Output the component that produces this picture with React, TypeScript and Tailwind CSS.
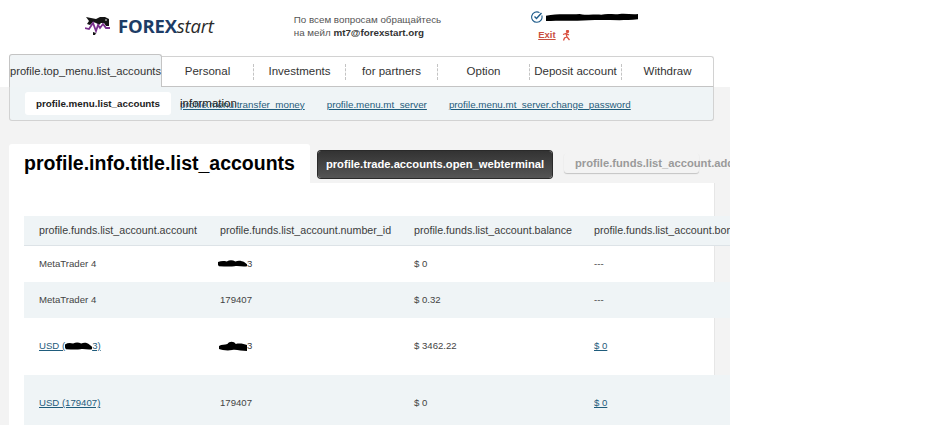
const Blob = ({ className, d }: { className: string; d: string }) => (
  <svg className={className} viewBox="0 0 30 10" preserveAspectRatio="none">
    <path d={d} fill="#000" />
  </svg>
);

const blobA = 'M0 3 C3 1 6 1 9 2 C12 0 15 0 18 2 C21 0 25 1 27 3 L30 6 L30 9 C25 10 21 8 17 9 C12 10 6 9 1 9 L0 7 Z';
const blobB = 'M0 5 C3 3 6 4 9 3 C11 0 16 0 18 3 C22 2 27 3 30 4 L30 10 C24 10 18 8 14 9 C9 10 3 9 0 8 Z';
const blobC = 'M0 3 C4 0 8 2 11 1 C14 3 16 1 18 2 C20 0 22 2 24 1 C26 0 28 2 30 1 L30 7 C24 9 20 7 14 8 C9 9 4 8 0 9 Z';

const tabs = ['Personal', 'Investments', 'for partners', 'Option', 'Deposit account', 'Withdraw'];

const Logo = () => (
  <svg width="25" height="21" viewBox="0 0 25 21" className="shrink-0">
    <path d="M1 1 L6 2 L11 3 L15 1 L20 1 L24 3 L24 10 L21 10 L19 7 L16 7 L14 9 L11 7 L8 6 L5 9 L2 8 L4 5 Z" fill="#141414" />
    <circle cx="21" cy="4" r="0.8" fill="#fff" />
    <path d="M0 12 L4 13 L8 7 L11 15 L13 9 L15 12 L18 8 L21 12 L25 12" fill="none" stroke="#7a2f8e" strokeWidth="1.8" />
    <path d="M8 16 L11 17 L10 19 L8 19 Z" fill="#141414" />
  </svg>
);

const Th = ({ children, className }: { children: string; className: string }) => (
  <div className={`shrink-0 whitespace-nowrap ${className}`}>{children}</div>
);

export default function App() {
  return (
    <div className="w-[935px] h-[425px] overflow-hidden bg-white text-[#333] font-['Liberation_Sans',Arial,sans-serif]">
      {/* Top header */}
      <header className="flex h-[56px]">
        <div className="ml-[85px] mt-[14px] flex h-[24px] items-center gap-[8px]">
          <Logo />
          <span className="text-[18.5px] leading-none tracking-[-0.2px] text-[#1d3c66] font-['Open_Sans',sans-serif]">
            <b>FOREX</b><i className="text-[#2a2a2a]">start</i>
          </span>
        </div>
        <div className="ml-[80px] mt-[13px] text-[9.8px] leading-[13px] text-[#555]">
          <div>По всем вопросам обращайтесь</div>
          <div>на мейл <span className="text-[#333] font-bold">mt7@forexstart.org</span></div>
        </div>
        <div className="ml-[90px] mt-[11px]">
          <div className="flex items-center gap-[3px]">
            <svg width="12" height="12" viewBox="0 0 12 12" fill="none" stroke="#1f5c8b" strokeWidth="1.1">
              <path d="M10.8 4.5 A5.2 5.2 0 1 1 8.5 1.6" />
              <path d="M3.5 5.5 L5.5 7.5 L10.5 2" strokeWidth="1.4" />
            </svg>
            <Blob className="w-[92px] h-[9px]" d={blobC} />
          </div>
          <div className="ml-[7px] mt-[5px] flex items-center gap-[6px]">
            <span className="text-[9.5px] font-bold text-[#c9503f] underline">Exit</span>
            <svg width="9" height="11" viewBox="0 0 9 11" fill="none" stroke="#d9503f" strokeWidth="1.3">
              <circle cx="5.5" cy="1.5" r="1" fill="#d9503f" />
              <path d="M1 4.5 L4 3.5 L7 5 M4 3.5 L5 7 L7.5 10 M5 7 L2.5 8 L1.5 10.5" />
            </svg>
          </div>
        </div>
      </header>

      {/* Main menu */}
      <nav className="relative ml-[9px] flex h-[31px] w-[705px] rounded-t-[3px] border border-[#d2d2d2] border-b-[#c4c4c4] bg-white text-[11.5px] text-[#333]">
        <div className="absolute left-[-1px] top-[-3px] flex h-[33px] w-[153px] items-center justify-center rounded-t-[3px] border border-b-0 border-[#c4c4c4] bg-[#f0f4f6] text-[11.2px] whitespace-nowrap">
          profile.top_menu.list_accounts
        </div>
        <div className="ml-[152px] flex flex-1 items-center pt-[1px]">
          {tabs.map((t, i) => (
            <div
              key={t}
              className={`flex h-[16px] flex-1 items-center justify-center whitespace-nowrap ${i > 0 ? 'border-l border-dashed border-[#c4c4c4]' : ''}`}
            >
              {t}
            </div>
          ))}
        </div>
      </nav>

      {/* Grey page body */}
      <main className="h-[400px] w-[730px] bg-[#f3f3f3] pl-[9px]">
        <div className="relative flex h-[34px] w-[705px] items-center rounded-b-[3px] border border-t-0 border-[#d2d2d2] bg-[#eff4f6] pl-[15px] text-[9.8px]">
          <div className="flex h-[23px] w-[146px] items-center justify-center rounded-[3px] bg-white pt-[1px] font-bold text-[#222]">
            profile.menu.list_accounts
          </div>
          <a className="ml-[9px] mt-[3px] text-[#1f5c7c] underline whitespace-nowrap">profile.menu.transfer_money</a>
          <a className="ml-[22px] mt-[3px] text-[#1f5c7c] underline whitespace-nowrap">profile.menu.mt_server</a>
          <a className="ml-[22px] mt-[3px] text-[#1f5c7c] underline whitespace-nowrap">profile.menu.mt_server.change_password</a>
          <span className="absolute left-[170px] top-[8px] text-[11.5px] text-[#222]">information</span>
        </div>

        {/* Title row */}
        <div className="mt-[23px] flex h-[39px] w-[721px] overflow-hidden">
          <div className="flex w-[301px] shrink-0 items-center justify-center rounded-t-[3px] bg-white pt-[1px] text-[19.5px] font-bold text-black">
            profile.info.title.list_accounts
          </div>
          <div className="ml-[8px] mt-[7px] flex h-[27px] w-[234px] shrink-0 items-center justify-center rounded-[3px] bg-gradient-to-b from-[#333] to-[#555] text-[11.2px] font-bold text-white shadow-[0_0_0_1px_#2a2a2a]">
            profile.trade.accounts.open_webterminal
          </div>
          <div className="relative ml-[12px] mt-[9px] h-[20px] w-[135px] shrink-0 rounded-[3px] bg-[#f3f3f3] shadow-[0_1px_1px_#c4c4c4]">
            <span className="absolute left-[11px] top-[2px] whitespace-nowrap text-[11.2px] font-bold text-[#9a9a9a]">
              profile.funds.list_account.add
            </span>
          </div>
        </div>

        {/* Accounts card */}
        <section className="h-[300px] w-[705px] bg-white pt-[33px] pl-[15px] shadow-[1px_0_0_#e6e6e6]">
          <div className="w-[706px] overflow-hidden text-[9.6px] text-[#444]">
            <div className="flex h-[30px] items-center border-b border-[#dde3e7] bg-[#eff4f6] pl-[15px] text-[10.7px] text-[#3c3c3c]">
              <Th className="w-[181px]">profile.funds.list_account.account</Th>
              <Th className="w-[194px]">profile.funds.list_account.number_id</Th>
              <Th className="w-[180px]">profile.funds.list_account.balance</Th>
              <Th className="w-[180px]">profile.funds.list_account.bonus</Th>
            </div>
            <div className="flex h-[36px] items-center pl-[15px]">
              <Th className="w-[181px]">MetaTrader 4</Th>
              <div className="flex w-[194px] shrink-0 items-center"><Blob className="w-[29px] h-[7px] -ml-[2px]" d={blobA} /><span>3</span></div>
              <Th className="w-[180px]">$ 0</Th>
              <Th className="w-[100px]">---</Th>
            </div>
            <div className="flex h-[36px] items-center bg-[#eff4f6] pl-[15px]">
              <Th className="w-[181px]">MetaTrader 4</Th>
              <Th className="w-[194px]">179407</Th>
              <Th className="w-[180px]">$ 0.32</Th>
              <Th className="w-[100px]">---</Th>
            </div>
            <div className="flex h-[57px] items-center pl-[15px]">
              <div className="flex w-[181px] shrink-0 items-center text-[#1f5c7c] underline">
                <span>USD (</span><Blob className="w-[27px] h-[8px]" d={blobA} /><span>3)</span>
              </div>
              <div className="flex w-[194px] shrink-0 items-center"><Blob className="w-[28px] h-[10px] -ml-[1px]" d={blobB} /><span>3</span></div>
              <Th className="w-[180px]">$ 3462.22</Th>
              <a className="text-[#1f5c7c] underline">$ 0</a>
            </div>
            <div className="flex h-[57px] items-center bg-[#eff4f6] pl-[15px]">
              <a className="w-[181px] shrink-0 text-[#1f5c7c] underline">USD (179407)</a>
              <Th className="w-[194px]">179407</Th>
              <Th className="w-[180px]">$ 0</Th>
              <a className="text-[#1f5c7c] underline">$ 0</a>
            </div>
          </div>
        </section>
      </main>
    </div>
  );
}
